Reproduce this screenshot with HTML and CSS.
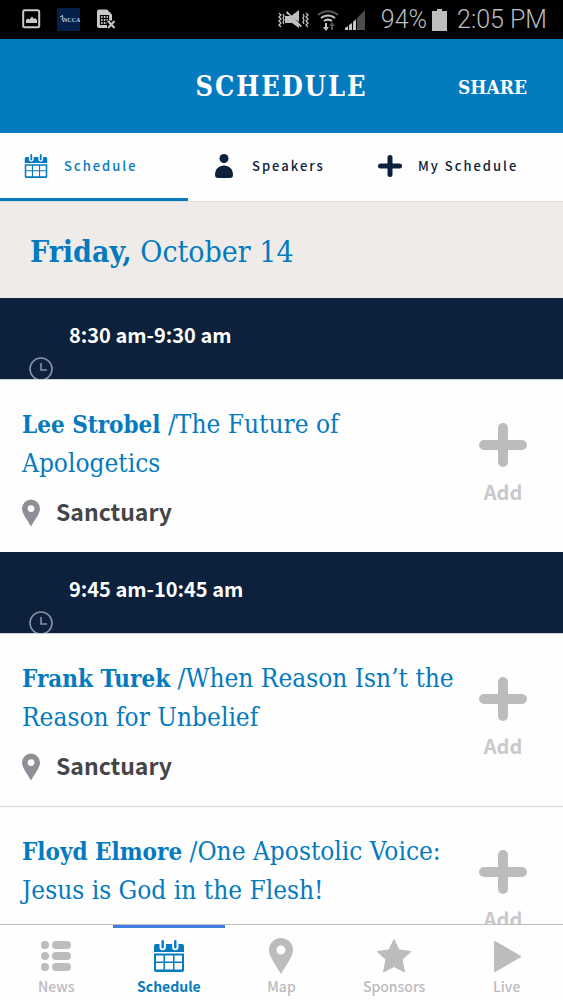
FILE: index.html
```html
<!DOCTYPE html>
<html lang="en">
<head>
<meta charset="utf-8">
<meta name="viewport" content="width=device-width, initial-scale=1">
<title>Schedule</title>
<link rel="stylesheet" href="styles.css">
</head>
<body>
<svg class="defs" aria-hidden="true">
  <symbol id="calendar" viewBox="0 0 30 32">
    <path fill="currentColor" fill-rule="evenodd" d="M2 4h3.500v3a3.200 3.200 0 0 0 6.400 0V4h6.200v3a3.200 3.200 0 0 0 6.400 0V4H28q2 0 2 2v6H0V6q0-2 2-2zM0 13.500h30V30q0 2-2 2H2q-2 0-2-2zM2 15.500v6h7.500v-6zm9 0v6h8v-6zm9.500 0v6H28v-6zM2 23v6.500h7.500V23zm9 0v6.500h8V23zm9.500 0v6.500H28V23z"/>
    <path d="M8.700 1.200v6M21.300 1.200v6" stroke="currentColor" stroke-width="2.400" stroke-linecap="round"/>
  </symbol>
  <symbol id="plus" viewBox="0 0 48 44">
    <path d="M24 5v34M5 22h38" stroke="currentColor" stroke-width="10" stroke-linecap="round"/>
  </symbol>
  <symbol id="pin" viewBox="0 0 24 36">
    <path fill="currentColor" fill-rule="evenodd" d="M12 0a12 12 0 0 1 12 12c0 7-7 15-12 24C7 27 0 19 0 12A12 12 0 0 1 12 0zm0 7.500a4.500 4.500 0 1 0 0 9 4.500 4.500 0 0 0 0-9z"/>
  </symbol>
  <symbol id="clock" viewBox="0 0 24 24">
    <path d="M12 1a11 11 0 1 1 0 22 11 11 0 0 1 0-22zM12 6v7h6" fill="none" stroke="currentColor" stroke-width="1.600"/>
  </symbol>
</svg>
<div class="app">
  <div class="status">
    <svg class="status-left" width="96" height="24" viewBox="0 0 96 24">
      <rect x="1.200" y="3.200" width="16" height="17" rx="1.500" fill="none" stroke="#c9c9c9" stroke-width="2"/>
      <path d="M4 16v-3l2-1.500 1.500 1 2.500-3 2 2.500 1-1 2 2v3z" fill="#c9c9c9"/>
      <rect x="35" y="1" width="23" height="23" fill="#04204b"/>
      <path d="M38 10l2-1 1 1-1 2 2 3M40 8l1 1" fill="none" stroke="#b9c6d6" stroke-width="1"/>
      <text class="logo-text" x="41" y="15">NCCA</text>
      <path d="M77 2.500h8l5 5V14l-5 7h-8q-2 0-2-2V4.500q0-2 2-2z" fill="#c9c9c9"/>
      <path d="M78.500 8.500h8v9h-8zM81.200 8.500v9M84 8.500v9M78.500 11.500h8M78.500 14.500h8" fill="none" stroke="#000" stroke-width="1.200"/>
      <path d="M85 13.500h8v9h-8z" fill="#000"/>
      <path d="M86 14l6.500 7M92.500 14L86 21" stroke="#c9c9c9" stroke-width="2"/>
    </svg>
    <div class="status-right">
      <svg width="90" height="24" viewBox="0 0 90 24">
        <g fill="none" stroke="#bfbfbf" stroke-width="1.300"><path d="M2 5l2 2-2 2 2 2-2 2 2 2-2 2 2 2M6 6l1 2-1 2 1 2-1 2 1 2M29 5l2 2-2 2 2 2-2 2 2 2-2 2 2 2M26 6l1 2-1 2 1 2-1 2 1 2"/></g>
        <path d="M8 8h5l-4-3 1-2 15 15-1 1-2-1v2l-7-5H8zM14 8l8-6v12z" fill="#bfbfbf"/>
        <g fill="none" stroke-width="2"><path d="M41 7a15 15 0 0 1 20 0" stroke="#555"/><path d="M44 10a11 11 0 0 1 14 0M47 13a7 7 0 0 1 8 0" stroke="#c5c5c5"/></g>
        <path d="M48 15h2v4h2l-3 4-3-4h2z" fill="#c5c5c5"/><path d="M54 22v-4h-2l3-4 3 4h-2v4z" fill="#555"/>
        <path d="M68 22v-2l3-2v4zM72 22v-5l3-2v7zM76 22v-8l3-3v11z" fill="#c5c5c5"/><path d="M80 22V10l8-8v20z" fill="#4c4c4c"/>
      </svg>
      <span class="battery-level">94%</span>
      <svg width="15" height="22" viewBox="0 0 15 22"><path d="M5 0h5v2h5v20H0V2h5z" fill="#bdbcbe"/></svg>
      <span class="time">2:05 PM</span>
    </div>
  </div>
  <header class="header">
    <h1 class="heading">SCHEDULE</h1>
    <button class="share" type="button">SHARE</button>
  </header>
  <nav class="tabs">
    <a class="tab active" href="#schedule"><svg class="tab-icon"><use href="#calendar"/></svg>Schedule</a>
    <a class="tab" href="#speakers"><svg class="tab-icon" viewBox="0 0 24 24"><circle cx="12" cy="4.500" r="4.500" fill="currentColor"/><path d="M3 21C3 15 7 11.500 12 11.500s9 3.500 9 9.500q0 3-3 3H6q-3 0-3-3z" fill="currentColor"/></svg>Speakers</a>
    <a class="tab" href="#mine"><svg class="tab-icon"><use href="#plus"/></svg>My Schedule</a>
  </nav>
  <main class="content">
    <h2 class="date"><b>Friday,</b> October 14</h2>
    <section>
      <div class="slot"><h3 class="slot-time">8:30 am-9:30 am</h3><svg class="clock"><use href="#clock"/></svg></div>
      <article class="session">
        <div class="info">
          <a class="title" href="#strobel"><b>Lee Strobel</b> /The Future of Apologetics</a>
          <p class="place"><svg class="place-icon"><use href="#pin"/></svg>Sanctuary</p>
        </div>
        <button class="add" type="button"><svg class="add-icon"><use href="#plus"/></svg>Add</button>
      </article>
    </section>
    <section>
      <div class="slot"><h3 class="slot-time">9:45 am-10:45 am</h3><svg class="clock"><use href="#clock"/></svg></div>
      <article class="session">
        <div class="info">
          <a class="title" href="#turek"><b>Frank Turek</b> /When Reason Isn’t the Reason for Unbelief</a>
          <p class="place"><svg class="place-icon"><use href="#pin"/></svg>Sanctuary</p>
        </div>
        <button class="add" type="button"><svg class="add-icon"><use href="#plus"/></svg>Add</button>
      </article>
      <article class="session">
        <div class="info">
          <a class="title" href="#elmore"><b>Floyd Elmore</b> /One Apostolic Voice: Jesus is God in the Flesh!</a>
        </div>
        <button class="add" type="button"><svg class="add-icon"><use href="#plus"/></svg>Add</button>
      </article>
    </section>
  </main>
  <nav class="bottom">
    <a class="item" href="#news"><svg class="item-icon" viewBox="0 0 36 36"><g fill="currentColor"><circle cx="7" cy="7" r="4"/><circle cx="7" cy="18" r="4"/><circle cx="7" cy="29" r="4"/><rect x="14" y="3" width="19" height="8" rx="4"/><rect x="14" y="14" width="19" height="8" rx="4"/><rect x="14" y="25" width="19" height="8" rx="4"/></g></svg>News</a>
    <a class="item current" href="#schedule"><svg class="item-icon cal"><use href="#calendar"/></svg>Schedule</a>
    <a class="item" href="#map"><svg class="item-icon"><use href="#pin"/></svg>Map</a>
    <a class="item" href="#sponsors"><svg class="item-icon" viewBox="0 0 36 36"><path d="M18 1.500l5 10.500 12 1.500-9 8L28.500 34 18 28.500 7.500 34 10 21.500l-9-8L13 12z" fill="currentColor" stroke="currentColor" stroke-linejoin="round"/></svg>Sponsors</a>
    <a class="item" href="#live"><svg class="item-icon" viewBox="0 0 36 36"><path d="M6 4l25 14.500L6 33z" fill="currentColor" stroke="currentColor" stroke-linejoin="round" stroke-width="2"/></svg>Live</a>
  </nav>
</div>
</body>
</html>
```
FILE: styles.css
```css
:root {
  --blue: #047abf;
  --navy: #0d213c;
  --gray: #bdbbbe;
  --slab: "Roboto Slab", "DejaVu Serif Condensed", "DejaVu Serif", serif;
  --sans: "Source Sans Pro", "Noto Sans CJK JP", sans-serif;
}
* { box-sizing: border-box; }
body { margin: 0; font-family: var(--sans); background: #fefefe; }
h1, h2, h3, p { margin: 0; }
a { color: inherit; text-decoration: none; }
button { border: 0; padding: 0; background: none; cursor: pointer; }
svg { flex: none; }
.defs { display: none; }
.app { display: flex; flex-direction: column; height: 100vh; }

.status {
  flex: none; display: flex; align-items: center; justify-content: space-between;
  height: 39px; padding: 0 16px 0 22px; background: #000; color: #bdbcbe;
  font: 25px/38px Roboto, sans-serif;
}
.status-left { margin-bottom: 2px; }
.status-right { display: flex; align-items: center; padding-top: 1px; }
.battery-level { font-weight: 300; margin: 0 5px 0 14px; }
.time { font-weight: 300; margin-left: 10px; }
.logo-text { font: bold 6px "Liberation Serif", serif; fill: #c4d0de; }

.header {
  flex: none; display: grid; grid-template-columns: 1fr auto 1fr; align-items: center;
  height: 94px; padding: 2px 36px 0; background: var(--blue); color: #fff;
}
.heading { grid-column: 2; font: bold 27px/36px var(--slab); letter-spacing: 2px; }
.share { justify-self: end; color: #fff; font: bold 19px/28px var(--slab); }

.tabs { flex: none; display: grid; grid-template-columns: 188fr 166fr 209fr; height: 69px; border-bottom: 1px solid #e0dfdf; }
.tab {
  display: flex; align-items: center; gap: 16px; padding-left: 24px;
  color: var(--navy); font-size: 13px; font-weight: 500; letter-spacing: 2px; white-space: nowrap;
  border-bottom: 3px solid transparent;
}
.tab.active { color: var(--blue); border-color: var(--blue); }
.tab-icon { width: 24px; height: 24px; }

.content { flex: 1; min-height: 0; overflow: hidden; }
.date { padding: 30px 30px 26px; background: #efebe9; color: var(--blue); font: 30px/40px var(--slab); }
.slot {
  display: flex; flex-direction: column; height: 82px; padding: 22px 29px 0; overflow: hidden;
  background: var(--navy); color: #fff; border-bottom: 1px solid #c8d4dc;
}
.slot-time { padding-left: 40px; font-size: 20px; line-height: 30px; }
.clock { width: 24px; height: 24px; margin-top: 7px; color: #8593a5; flex: none; }
.session { display: flex; justify-content: space-between; gap: 20px; padding: 25px 36px 22px 22px; }
.session + .session { border-top: 1px solid #d4d4d6; }
.info { flex: 1; }
.title { display: block; color: var(--blue); font: 26px/38px var(--slab); }
.title b { font-size: 24px; }
.place { display: flex; align-items: center; gap: 16px; margin-top: 10px; color: #444548; font-size: 23px; line-height: 38px; font-weight: 700; }
.place-icon { width: 18px; height: 28px; margin-top: 4px; color: #8d9195; }
.add {
  flex: none; display: flex; flex-direction: column; align-items: center; align-self: flex-start;
  gap: 10px; width: 48px; padding-top: 18px; color: #c9c8ca; font: bold 20px/30px var(--sans);
}
.add-icon { width: 48px; height: 44px; color: var(--gray); }

.bottom { flex: none; display: flex; height: 76px; border-top: 1px solid #bebdbf; background: #fefefe; }
.item {
  flex: 1; display: flex; flex-direction: column; align-items: center; gap: 1px;
  padding-top: 10px; border-top: 3px solid transparent; color: var(--gray);
  font-size: 14px; line-height: 22px; font-weight: 500;
}
.item.current { color: var(--blue); border-color: #427be2; font-weight: 700; }
.item-icon { width: 36px; height: 36px; }
.item-icon.cal { height: 32px; margin: 2px 0; }
```
